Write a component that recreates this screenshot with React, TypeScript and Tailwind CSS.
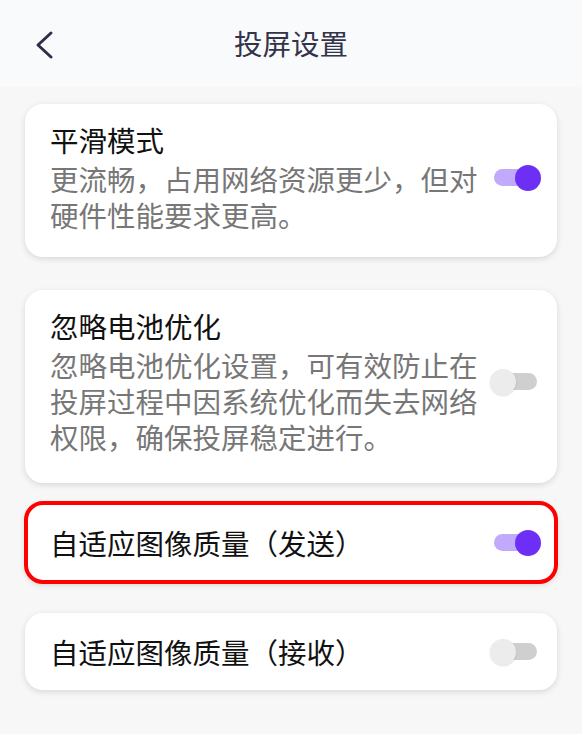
interface ToggleProps {
  on: boolean
}

function Toggle({ on }: ToggleProps) {
  return (
    <div className="relative h-[26px] w-[51px] shrink-0">
      <div
        className={`absolute top-[4.5px] right-[4px] left-[4px] h-[17px] rounded-full ${
          on ? 'bg-[#c2aafb]' : 'bg-[#cfcfcf]'
        }`}
      />
      <div
        className={`absolute top-0 h-[26px] w-[26px] rounded-full ${
          on ? 'right-0 bg-[#6d2ef5]' : 'left-0 bg-[#ececec] shadow-[0_1px_2px_rgba(0,0,0,0.12)]'
        }`}
      />
    </div>
  )
}

interface SettingCardProps {
  title: string
  desc?: string
  on: boolean
  highlighted?: boolean
  className?: string
}

function SettingCard({ title, desc, on, highlighted, className = '' }: SettingCardProps) {
  return (
    <div
      className={`flex items-center rounded-[18px] bg-white pr-[16px] pl-[25px] shadow-[0_2px_6px_rgba(0,0,0,0.13)] ${
        highlighted ? 'outline-4 outline-[#ff0000] outline-offset-[-3px]' : ''
      } ${className}`}
    >
      <div className="flex-1 pr-[10px]">
        <div className="text-[28.5px] leading-[36px] text-[#111111]">{title}</div>
        {desc && <div className="mt-[3px] text-[28.5px] leading-[36px] text-[#777777]">{desc}</div>}
      </div>
      <Toggle on={on} />
    </div>
  )
}

export default function App() {
  return (
    <div
      className="flex h-[734px] w-[582px] flex-col overflow-hidden bg-[#f7f7f7]"
      style={{ fontFamily: '"Noto Sans CJK SC", "Noto Sans", sans-serif' }}
    >
      {/* Header */}
      <div className="relative flex h-[87px] shrink-0 items-center justify-center bg-[#f9fafc]">
        <svg
          width="22"
          height="32"
          viewBox="0 0 22 32"
          fill="none"
          className="absolute top-[29px] left-[34px]"
          aria-hidden="true"
        >
          <polyline
            points="17,4 4,16 17,28"
            stroke="#2e2e48"
            strokeWidth="3"
            strokeLinecap="round"
            strokeLinejoin="round"
          />
        </svg>
        <div className="text-[28.5px] leading-none text-[#33334a]">投屏设置</div>
      </div>

      <div className="flex flex-col px-[25px] pt-[17px]">
        <SettingCard
          title="平滑模式"
          desc="更流畅，占用网络资源更少，但对硬件性能要求更高。"
          on
          className="pt-[18px] pb-[24px]"
        />
        <SettingCard
          title="忽略电池优化"
          desc="忽略电池优化设置，可有效防止在投屏过程中因系统优化而失去网络权限，确保投屏稳定进行。"
          on={false}
          className="mt-[33px] pt-[18px] pb-[28px]"
        />
        <SettingCard
          title="自适应图像质量（发送）"
          on
          highlighted
          className="mt-[19px] h-[81px]"
        />
        <SettingCard title="自适应图像质量（接收）" on={false} className="mt-[30px] h-[77px]" />
      </div>
    </div>
  )
}
